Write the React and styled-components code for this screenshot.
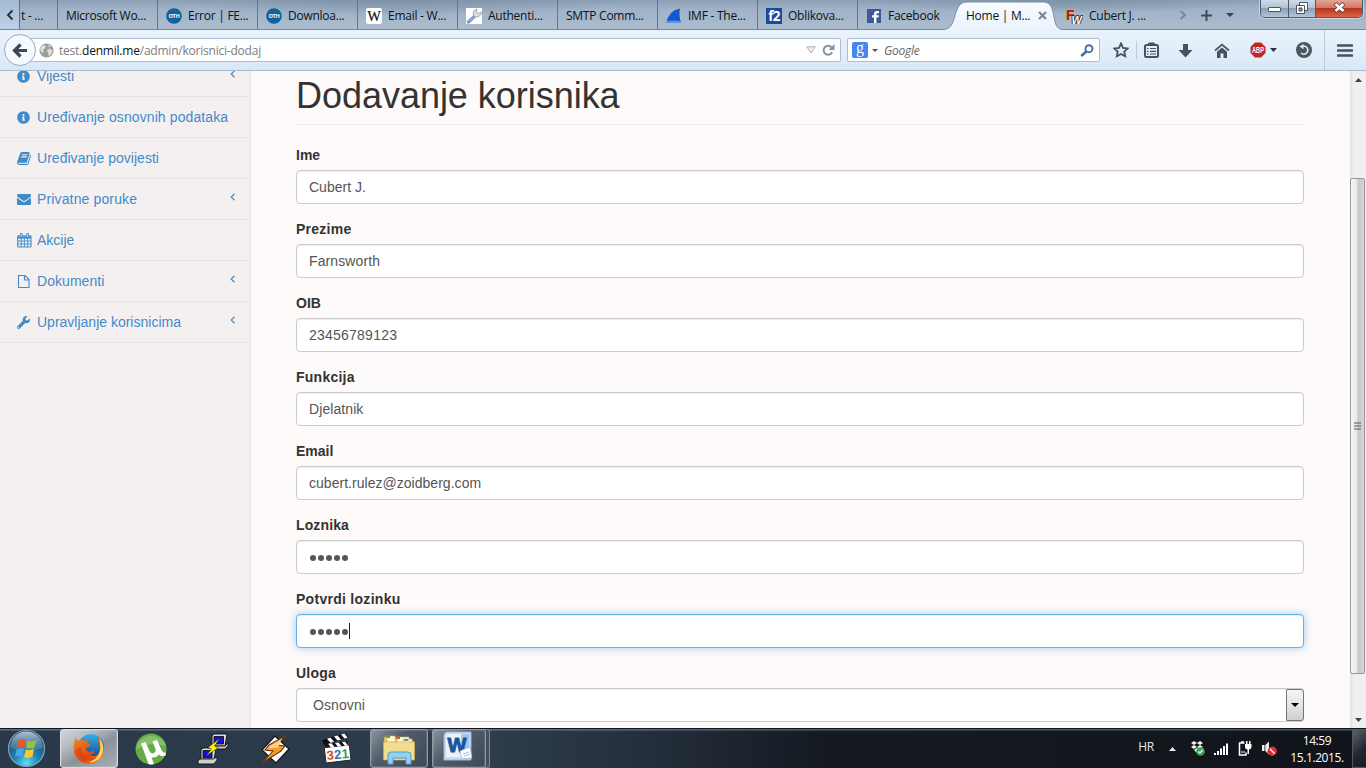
import React from "react";
import styled, { createGlobalStyle, css } from "styled-components";
import { FaInfoCircle, FaWrench } from "react-icons/fa";

const Global = createGlobalStyle`
  * { box-sizing: border-box; }
  body { margin: 0; width: 1366px; height: 768px; overflow: hidden; }
  svg { display: block; flex: none; }
`;
const ui = `"Open Sans", "Noto Sans", sans-serif`;

const Screen = styled.div`
  width: 1366px; height: 768px; display: flex; flex-direction: column;
  overflow: hidden; font-family: "Liberation Sans", Arial, sans-serif;
`;

/* ---------- tab strip ---------- */
const TabStrip = styled.header`
  height: 30px; flex: none; display: flex; position: relative;
  background:
    radial-gradient(ellipse 230px 16px at 400px 0, #7e92a8 0, transparent 100%),
    radial-gradient(ellipse 200px 14px at 1060px 0, #7e92a8 0, transparent 100%),
    linear-gradient(#8c9fb5 0, #9fb2c8 30%, #abbdcd 100%);
  border-bottom: 1px solid #74879c;
`;
const ScrollLeft = styled.div`
  width: 20px; flex: none; display: flex; align-items: center; padding-left: 6px;
  background: linear-gradient(#a3b9d1, #bdd2e8); border-right: 1px solid #5d6f84;
`;
const Tab = styled.div`
  width: ${(p) => p.$w || 100}px; flex: none; display: flex; align-items: center; gap: 6px;
  padding-left: ${(p) => (p.$pad ?? 8)}px; padding-top: 2px;
  border-right: ${(p) => (p.$last ? "0" : "1px solid #63768b")};
  font: 12px/16px ${ui}; letter-spacing: ${(p) => p.$ls ?? -0.25}px; color: #0d1116; white-space: nowrap;
`;
const ActiveTab = styled(Tab)`
  position: relative; padding: 2px 0 0 23px; border: 0; gap: 8px; z-index: 1;
`;
const TabShape = styled.svg`
  position: absolute; left: 0; top: 0; z-index: -1;
`;
const StripTools = styled.div`
  display: flex; align-items: center; gap: 14px; padding-left: 11px; padding-top: 1px;
`;
const WindowButtons = styled.div`
  margin-left: auto; margin-right: 3px; height: 18px; display: flex; flex: none;
  border: 1px solid #4d5a69; border-top: 0; border-radius: 0 0 5px 5px; overflow: hidden;
  box-shadow: 0 0 0 1px rgba(255,255,255,.45);
`;
const WinBtn = styled.div`
  width: ${(p) => p.$w}px; display: flex; align-items: center; justify-content: center; padding-bottom: 2px;
  border-right: ${(p) => (p.$close ? "0" : "1px solid #4d5a69")};
  background: ${(p) => p.$close
    ? "linear-gradient(#e5a496 0, #d0796a 45%, #b8361f 50%, #d9644a 100%)"
    : "linear-gradient(#cfdbe8 0, #b3c3d4 45%, #8ba0b6 50%, #b3c7da 100%)"};
`;

/* ---------- navigation bar ---------- */
const NavBar = styled.div`
  height: 41px; flex: none; display: flex; align-items: center;
  background: linear-gradient(#eaf3fc, #d9e8f7); border-bottom: 1px solid #a4bbd3;
`;
const BackButton = styled.div`
  width: 32px; height: 32px; margin-left: 4px; border-radius: 50%; flex: none; z-index: 1;
  border: 1px solid #97abc2; background: #f6faff; display: flex; align-items: center; justify-content: center;
`;
const Field = styled.div`
  height: 24px; flex: none; display: flex; align-items: center; background: #fff; border: 1px solid #abbfd4;
  border-radius: 2px; font: 12px/16px ${ui};
`;
const AddressBar = styled(Field)`
  width: 812px; margin-left: -7px; padding: 0 4px 0 10px; border-left: 0;
`;
const Url = styled.span`
  margin-left: 5px; padding-top: 1px; flex: 1; letter-spacing: -0.22px; color: #7c7c7c;
  b { font-weight: 400; color: #111; }
`;
const SearchBar = styled(Field)`
  width: 253px; margin-left: 6px; padding: 0 5px 0 4px; font-style: italic; color: #666;
`;
const SearchText = styled.span`flex: 1; margin-left: 6px; padding-top: 1px; letter-spacing: -0.25px;`;
const GoogleMark = styled.span`
  width: 16px; height: 16px; margin-right: 4px; border-radius: 2px; background: #4486f2; color: #fff;
  font: 400 16px/12px "Liberation Serif", serif; text-align: center;
`;
const Tools = styled.div`display: flex; align-items: center; flex: 1; padding-left: 13px;`;
const Tool = styled.div`margin-right: ${(p) => p.$mr || 0}px;`;
const Divider = styled.div`
  width: 1px; height: ${(p) => p.$h}px; background: #bccbdc; margin-right: ${(p) => p.$mr}px;
`;

/* ---------- page ---------- */
const Page = styled.main`
  height: 657px; flex: none; display: flex; overflow: hidden; background: #fefaf9;
`;
const Sidebar = styled.nav`
  width: 251px; flex: none; background: #f5f0f0; border-right: 1px solid #e9e4e4; overflow: hidden;
`;
const Menu = styled.div`margin-top: -15px;`;
const MenuItem = styled.a`
  height: 41px; display: flex; align-items: center; padding: 0 14px 0 17px; letter-spacing: ${(p) => p.$ls || 0}px;
  border-bottom: 1px solid #e7e3e3; color: #428bca; font-size: 14px; line-height: 20px; white-space: nowrap;
`;
const MenuIcon = styled.span`width: 20px; display: flex; flex: none;`;
const Chevron = styled.svg`margin: -5px 0 0 auto;`;
const Content = styled.section`flex: 1; padding: 4px 46px 0 45px; overflow: hidden;`;
const Title = styled.h1`
  margin: 0 0 20px; padding-top: 1px; height: 50px; border-bottom: 1px solid #eee9e8;
  font: 400 36px/40px "Liberation Sans", Arial, sans-serif; color: #333; letter-spacing: -0.03px;
`;
const Group = styled.div`margin-bottom: 15px;`;
const Label = styled.label`
  display: block; margin-bottom: 5px; font-size: 14px; line-height: 20px; font-weight: 700; color: #333;
  letter-spacing: ${(p) => p.$ls || 0}px;
`;
const Input = styled.div`
  height: 34px; display: flex; align-items: center; padding-left: 12px; border-radius: 4px;
  border: 1px solid #ccc; background: #fff; color: #555; font-size: 14px; line-height: 20px;
  letter-spacing: ${(p) => p.$ls || 0}px;
  box-shadow: inset 0 1px 1px rgba(0,0,0,.075);
  ${(p) => p.$focus && css`
    border-color: #66afe9;
    box-shadow: inset 0 1px 1px rgba(0,0,0,.075), 0 0 8px rgba(102,175,233,.6);
  `}
`;
const Select = styled(Input)`padding-left: 16px; border-right: 0; justify-content: space-between;`;
const SelectArrow = styled.span`
  width: 18px; height: 32px; border: 1px solid #757575; border-radius: 1px 3px 3px 1px; display: flex; align-items: center;
  justify-content: center; background: linear-gradient(#f3f3f3, #e6e6e6 50%, #cfcfcf);
`;
const Dots = styled.span`display: flex; gap: 2px; padding-left: 1px;`;
const Dot = styled.i`width: 6px; height: 6px; border-radius: 50%; background: #555; margin-top: 1px;`;
const Caret = styled.i`width: 1px; height: 16px; background: #222; margin-left: 1px; margin-top: -1px;`;

const ScrollBar = styled.div`
  width: 16px; flex: none; display: flex; flex-direction: column; align-items: flex-start;
  background: linear-gradient(90deg, #e3e3e3, #efefef 25%, #f0f0f0);
`;
const ScrollEnd = styled.div`
  height: ${(p) => p.$h}px; padding: ${(p) => p.$pt}px 0 0 5px; flex: none;
`;
const Thumb = styled.div`
  width: 15px; height: 496px; flex: none; border: 1px solid #979797; border-radius: 2px;
  background: linear-gradient(90deg, #f6f6f6, #e7e7e9 45%, #c7c7cb 55%, #d4d4d8);
  display: flex; align-items: center; justify-content: center;
`;

/* ---------- task bar ---------- */
const TaskBar = styled.footer`
  height: 40px; flex: none; display: flex; align-items: stretch; gap: 4px; border-top: 1px solid #0d1622;
  background:
    linear-gradient(rgba(190,210,230,.45) 0, rgba(190,210,230,.06) 2px, transparent 3px),
    linear-gradient(90deg, #29394a 0, #2e3c4c 36%, #232e3a 48%, #151a22 60%, #10141a 100%);
`;
const StartSlot = styled.div`width: 56px; display: flex; align-items: center; padding-left: 7px;`;
const TaskSlot = styled.div`
  width: 58px; display: flex; align-items: center; justify-content: center; border-radius: 3px;
  ${(p) => p.$open && css`
    border: 1px solid #8f9aa6; box-shadow: inset 0 0 0 1px rgba(255,255,255,.12);
    background: linear-gradient(135deg, #8a939d 0, #515c68 40%, #3e4a56 100%);
  `}
  ${(p) => p.$active && css`
    border-color: #d9dde1;
    background: linear-gradient(150deg, #d2d4d7 0, #b5b9be 30%, #8b9299 55%, #a9aeb4 100%);
  `}
`;
const StackSlot = styled.div`
  width: 58px; display: flex; border: 1px solid #7f8b97; border-left: 0; border-radius: 3px; background: #424e5b;
`;
const StackFront = styled(TaskSlot)`width: 54px; margin: -1px 0; padding: 0 4px 4px 0;`;
const Tray = styled.div`
  margin-left: auto; display: flex; align-items: center; color: #fff; font: 12px/17px ${ui}; letter-spacing: -0.4px;
`;
const Lang = styled.span`margin-right: 15px; margin-top: -5px; font-size: 12px; letter-spacing: -0.2px; color: #e5e8ec;`;
const TrayIcon = styled.span`margin-right: ${(p) => p.$mr}px;`;
const Clock = styled.div`width: 62px; text-align: center; margin-right: 4px;`;
const ShowDesktop = styled.div`
  width: 14px; align-self: stretch; border: 1px solid #4e5864; border-right: 0;
  background: linear-gradient(135deg, #5a636d, #20262e 60%, #181d24);
`;

const OthIcon = () => (
  <svg width="16" height="16" viewBox="0 0 16 16">
    <circle cx="8" cy="8" r="7.8" fill="#126299" />
    <text x="8" y="10" textAnchor="middle" fontFamily="Open Sans" fontWeight="700" fontSize="5.6" fill="#fff">OTH</text>
  </svg>
);
const WikiIcon = () => (
  <svg width="16" height="16" viewBox="0 0 16 16">
    <rect width="16" height="16" rx="2" fill="#fff" />
    <text x="8" y="13" textAnchor="middle" fontFamily="Liberation Serif" fontSize="14.5" fill="#111" stroke="#111" strokeWidth=".2">W</text>
  </svg>
);
const ToolIcon = () => (
  <svg width="16" height="16" viewBox="0 0 16 16">
    <rect width="16" height="16" fill="#fff" />
    <path d="M8 7 1 13.500Q1 16 3.500 15L9.500 9z" fill="#8aa8dc" stroke="#5e7fb8" strokeWidth=".8" />
    <path d="M7 7Q7 2 11 1L10.500 4.500 12 5.500 15.500 4Q15 9 9.500 9z" fill="#ddd" stroke="#9a9a9a" strokeWidth=".8" />
  </svg>
);
const FinIcon = () => (
  <svg width="16" height="16" viewBox="0 0 16 16">
    <path d="M.5 15Q2 3 14 .5 12.500 7 15 15z" fill="#1557cf" />
    <path d="M.5 15 1.200 13Q8 12 14.500 13L15 15z" fill="#5c93e4" />
  </svg>
);
const F2Icon = () => (
  <svg width="16" height="16" viewBox="0 0 16 16">
    <rect width="16" height="16" fill="#1b4a9c" />
    <text x="8" y="13" textAnchor="middle" fontFamily="Open Sans" fontWeight="700" fontSize="13.500" letterSpacing="-.7" fill="#fff">f2</text>
  </svg>
);
const FbIcon = () => (
  <svg width="16" height="16" viewBox="0 0 16 16">
    <rect x="1" y="1" width="14" height="14" fill="#3c5a99" />
    <path d="M8 15V9.500H6V7.300h2V6Q8 3 11 3h2v2.200h-1.300Q10.400 5.200 10.400 6.300v1h2.500l-.4 2.200h-2.100V15z" fill="#fff" />
  </svg>
);
const FwIcon = () => (
  <svg width="17" height="16" viewBox="0 0 17 16">
    <text x="0" y="11.500" fontFamily="Liberation Sans" fontWeight="700" fontSize="14" fill="#b01912" stroke="#f5b21f" strokeWidth=".8" paintOrder="stroke">F</text>
    <text x="5.500" y="15.500" fontFamily="Liberation Sans" fontWeight="700" fontStyle="italic" fontSize="11" fill="#fff" stroke="#222" strokeWidth="1.600" paintOrder="stroke">W</text>
  </svg>
);

const tabs = [
  { icon: null, text: "Microsoft Wo..." },
  { icon: <OthIcon />, text: "Error | FE..." },
  { icon: <OthIcon />, text: "Downloa..." },
  { icon: <WikiIcon />, text: "Email - W..." },
  { icon: <ToolIcon />, text: "Authenti..." },
  { icon: null, text: "SMTP Comm..." },
  { icon: <FinIcon />, text: "IMF - The..." },
  { icon: <F2Icon />, text: "Oblikova..." },
];

const InfoGlyph = () => <FaInfoCircle size={13} />;
const BookGlyph = () => (
  <svg width="14" height="15" viewBox="0 0 1664 1792" fill="currentColor">
    <path d="M1639 478q40 57 18 129l-275 906q-19 64-76.500 107.500T1183 1664H260q-77 0-148.500-53.500T12 1479q-24-67-2-127 0-4 3-27t4-37q1-8-3-21.500t-3-19.500q2-11 8-21t16.500-23.500T52 1179q23-38 45-91.500t30-91.500q3-10 .5-30t-.5-28q3-11 17-28t17-23q21-36 42-92t25-90q1-9-2.500-32t.5-28q4-13 22-30.500t22-22.500q19-26 42.500-84.500T340 411q1-8-3-25.500t-2-26.500q2-8 9-18t18-23 17-21q8-12 16.500-30.500t15-35 16-36 19.500-32T472.500 140t36-11.500T556 134l-1 3q38-9 51-9h761q74 0 114 56t18 130l-274 906q-36 119-71.500 153.500T1025 1408H156q-27 0-38 15-11 16-1 43 24 70 144 70h923q29 0 56-15.500t35-41.500l300-987q7-22 5-57 38 15 59 43zm-1064 2q-4 13 2 22.500t20 9.500h608q13 0 25.500-9.500T1247 480l21-64q4-13-2-22.500t-20-9.500H638q-13 0-25.500 9.500T596 416zm-83 256q-4 13 2 22.500t20 9.500h608q13 0 25.500-9.500T1164 736l21-64q4-13-2-22.500t-20-9.500H555q-13 0-25.500 9.500T513 672z" />
  </svg>
);
const MailGlyph = () => (
  <svg width="14" height="14" viewBox="0 0 1792 1792" fill="currentColor">
    <path d="M1792 710v794q0 66-47 113t-113 47H160q-66 0-113-47T0 1504V710q44 49 101 87 362 246 497 345 57 42 92.500 65.500t94.500 48 110 24.500h2q51 0 110-24.500t94.500-48T1194 1142q170-123 498-345 57-39 100-87zm0-294q0 79-49 151t-122 123q-376 261-468 325-10 7-42.500 31t-54 38.500-52 32.500-57.500 27-50 9h-2q-23 0-50-9t-57.500-27-52-32.500T683 1046t-42.500-31q-91-64-262-182.500T173 690q-62-42-117-115.500T1 438q0-78 41.500-130T160 256h1472q65 0 112.500 47t47.500 113z" />
  </svg>
);
const CalendarGlyph = () => (
  <svg width="15" height="15" viewBox="0 0 15 15" fill="none" stroke="currentColor">
    <rect x=".7" y="2.700" width="13.300" height="11.300" rx=".8" strokeWidth="1.100" />
    <path d="M1 4.500h13" strokeWidth="2.200" />
    <path d="M1 8h13M1 11h13M4.200 5v9M7.400 5v9M10.600 5v9" strokeWidth=".9" />
    <path d="M4.200 .8v3.400M10.600 .8v3.400" strokeWidth="2.400" strokeLinecap="round" />
    <path d="M4.200 1v3M10.600 1v3" stroke="#f5f0f0" strokeWidth=".8" />
  </svg>
);
const FileGlyph = () => (
  <svg width="13" height="15" viewBox="0 0 13 15" fill="none" stroke="currentColor" strokeWidth="1.100">
    <path d="M1.500 1.500h6.500l4 4v8h-10.500zM7.500 1.500v4.500H12" />
  </svg>
);

const menu = [
  { icon: <InfoGlyph />, text: "Vijesti", arrow: true },
  { icon: <InfoGlyph />, text: "Uređivanje osnovnih podataka", ls: 0.1 },
  { icon: <BookGlyph />, text: "Uređivanje povijesti", ls: 0.03 },
  { icon: <MailGlyph />, text: "Privatne poruke", arrow: true, ls: 0.14 },
  { icon: <CalendarGlyph />, text: "Akcije" },
  { icon: <FileGlyph />, text: "Dokumenti", arrow: true, ls: 0.05 },
  { icon: <FaWrench size={13} />, text: "Upravljanje korisnicima", arrow: true },
];

const fields = [
  { label: "Ime", value: "Cubert J." },
  { label: "Prezime", value: "Farnsworth", ls: 0.25, vls: 0.1 },
  { label: "OIB", value: "23456789123", vls: 0.23 },
  { label: "Funkcija", value: "Djelatnik", ls: 0.25, vls: 0.08 },
  { label: "Email", value: "cubert.rulez@zoidberg.com", vls: 0.03 },
];

const Triangle = ({ w = 7, h = 4, up, color = "#444" }) => (
  <svg width={w} height={h} viewBox="0 0 8 4" preserveAspectRatio="none">
    <path d={up ? "M0 4 4 0 8 4z" : "M0 0H8L4 4z"} fill={color} />
  </svg>
);

const Password = ({ caret }) => (
  <>
    <Dots>{[0, 1, 2, 3, 4].map((i) => <Dot key={i} />)}</Dots>
    {caret && <Caret />}
  </>
);

function Tabs() {
  return (
    <TabStrip>
      <ScrollLeft>
        <svg width="8" height="12" viewBox="0 0 8 12"><path d="M6.500 1.500 2 6l4.500 4.500" fill="none" stroke="#263342" strokeWidth="2" /></svg>
      </ScrollLeft>
      <Tab $w={38} $pad={1}>t - ...</Tab>
      {tabs.map((t, i) => <Tab key={i}>{t.icon}{t.text}</Tab>)}
      <Tab $w={85} $last><FbIcon />Facebook</Tab>
      <ActiveTab $w={115}>
        <TabShape width="124" height="31" viewBox="0 0 124 31">
          <defs><linearGradient id="tab" x2="0" y2="1"><stop stopColor="#f8fbff" /><stop offset="1" stopColor="#eaf3fc" /></linearGradient></defs>
          <path d="M0 29.500C16 29.500 8 2 24 2H100C116 2 106 29.500 120 29.500V31H0z" fill="url(#tab)" />
          <path d="M0 29.500C16 29.500 8 2 24 2H100C116 2 106 29.500 120 29.500" fill="none" stroke="#7b8ea4" />
        </TabShape>
        Home | M...
        <svg width="9" height="9" viewBox="0 0 9 9"><path d="M1 1l7 7M8 1 1 8" stroke="#7c8794" strokeWidth="2.200" /></svg>
      </ActiveTab>
      <Tab $w={110} $last $pad={8}><FwIcon />Cubert J. ...</Tab>
      <StripTools>
        <svg width="8" height="10" viewBox="0 0 8 10"><path d="M1.500 1 6 5 1.500 9" fill="none" stroke="#76879a" strokeWidth="2" /></svg>
        <svg width="11" height="11" viewBox="0 0 11 11"><path d="M5.500 0v11M0 5.500h11" stroke="#3e4b59" strokeWidth="2" /></svg>
        <Triangle w={8} h={4} color="#35414e" />
      </StripTools>
      <WindowButtons>
        <WinBtn $w={28}><svg width="13" height="8" viewBox="0 0 13 8"><rect x=".5" y="3.500" width="12" height="4" rx=".5" fill="#fff" stroke="#4c5663" /></svg></WinBtn>
        <WinBtn $w={27}>
          <svg width="12" height="12" viewBox="0 0 12 12" fill="#fff" stroke="#4c5663"><path d="M3.500 .5h8v8h-8z" /><path d="M.5 3.500h8v8h-8z" /><path d="M3 6h3v3H3z" fill="#8295aa" /></svg>
        </WinBtn>
        <WinBtn $w={46} $close>
          <svg width="13" height="11" viewBox="0 0 13 11"><path d="M2 1.500l9 8M11 1.500l-9 8" stroke="#643a38" strokeWidth="4" /><path d="M2.500 2l8 7M10.500 2l-8 7" stroke="#fff" strokeWidth="2.600" /></svg>
        </WinBtn>
      </WindowButtons>
    </TabStrip>
  );
}

function Navigation() {
  return (
    <NavBar>
      <BackButton>
        <svg width="16" height="15" viewBox="0 0 16 15"><path d="M8.500 1.500 2.500 7.500l6 6M3 7.500h12" fill="none" stroke="#3c4957" strokeWidth="3.200" /></svg>
      </BackButton>
      <AddressBar>
        <svg width="15" height="15" viewBox="0 0 15 15">
          <circle cx="7.500" cy="7.500" r="7" fill="#9b9b9b" />
          <path d="M2 3.500 5 2l2 1.500L5.500 6 4 6.500 5 9 3.500 10 1 7zM8 7l3-1.500 2.500 2-1 3-2.500 3-1-3.500zM9 1.500l3 2-2 1z" fill="#dedede" />
        </svg>
        <Url>test.<b>denmil.me</b>/admin/korisnici-dodaj</Url>
        <svg width="10" height="8" viewBox="0 0 10 8"><path d="M.8 .8h8.400L5 7z" fill="#f0f0f0" stroke="#b0b0b0" /></svg>
        <svg width="20" height="13" viewBox="0 0 20 13"><path d="M16.200 8.200A4.500 4.500 0 1 1 15.800 3.500" fill="none" stroke="#8791a0" strokeWidth="2" /><path d="M18.500 0v6h-6z" fill="#8791a0" /></svg>
      </AddressBar>
      <SearchBar>
        <GoogleMark>g</GoogleMark>
        <Triangle w={6} h={3} color="#555" />
        <SearchText>Google</SearchText>
        <svg width="14" height="13" viewBox="0 0 14 13"><circle cx="9" cy="4.700" r="3.500" fill="none" stroke="#3f6fa5" strokeWidth="1.900" /><path d="M6.500 7.200 1.300 12" stroke="#3f6fa5" strokeWidth="2.600" /></svg>
      </SearchBar>
      <Tools>
        <Tool $mr={7}><svg width="16" height="16" viewBox="0 0 16 16"><path d="M8 1.500l2 4.300 4.700.6-3.400 3.200.9 4.700L8 12l-4.200 2.300.9-4.700L1.300 6.400 6 5.800z" fill="none" stroke="#46535f" strokeWidth="1.800" /></svg></Tool>
        <Divider $h={18} $mr={7} />
        <Tool $mr={19}>
          <svg width="15" height="16" viewBox="0 0 15 16"><rect x="1" y="3" width="13" height="12" rx="1.500" fill="none" stroke="#46535f" strokeWidth="2" /><path d="M4 1.500Q4 .5 5.500 .5h4Q11 .5 11 1.500V4H4z" fill="#46535f" /><path d="M3 6.500h1.500M3 9.300h1.500M3 12h1.500M6 6.500h6M6 9.300h6M6 12h6" stroke="#46535f" strokeWidth="1.200" /></svg>
        </Tool>
        <Tool $mr={21}><svg width="15" height="15" viewBox="0 0 15 15"><path d="M5 1h5v6h4.500l-7 7.500L.5 7H5z" fill="#46535f" /></svg></Tool>
        <Tool $mr={20}><svg width="16" height="15" viewBox="0 0 16 15"><path d="M1 7.500 8 1.500l7 6" fill="none" stroke="#46535f" strokeWidth="1.700" /><path d="M3 8.800 8 4.500l5 4.300V15H9.500v-4.500h-3V15H3z" fill="#46535f" /></svg></Tool>
        <Tool $mr={4}><svg width="16" height="16" viewBox="0 0 16 16"><path d="M5 .5h6L15.500 5v6L11 15.500H5L.5 11V5z" fill="#c0281f" /><text x="8" y="11.200" textAnchor="middle" fontFamily="Liberation Sans" fontWeight="700" fontSize="8.500" textLength="12" lengthAdjust="spacingAndGlyphs" fill="#fff">ABP</text></svg></Tool>
        <Tool $mr={19}><Triangle w={7} h={4} color="#26313b" /></Tool>
        <Tool $mr={12}><svg width="16" height="16" viewBox="0 0 16 16"><circle cx="8" cy="8" r="8" fill="#4c5762" /><path d="M6.500 4.300A4 4 0 1 1 5 11" fill="none" stroke="#e4ebf2" strokeWidth="1.600" /><path d="M7.500 2v5.200L3.500 4.500z" fill="#e4ebf2" /></svg></Tool>
        <Divider $h={40} $mr={12} />
        <Tool><svg width="16" height="13" viewBox="0 0 16 13"><path d="M1 1.500h14M1 6.500h14M1 11.500h14" stroke="#46535f" strokeWidth="2.600" strokeLinecap="round" /></svg></Tool>
      </Tools>
    </NavBar>
  );
}

function Body() {
  return (
    <Page>
      <Sidebar>
        <Menu>
          {menu.map((m) => (
            <MenuItem key={m.text} $ls={m.ls}>
              <MenuIcon>{m.icon}</MenuIcon>
              {m.text}
              {m.arrow && <Chevron width="6" height="8" viewBox="0 0 6 8"><path d="M4.500 .8 1.200 4l3.300 3.200" fill="none" stroke="#428bca" strokeWidth="1.200" /></Chevron>}
            </MenuItem>
          ))}
        </Menu>
      </Sidebar>
      <Content>
        <Title>Dodavanje korisnika</Title>
        {fields.map((f) => (
          <Group key={f.label}><Label $ls={f.ls}>{f.label}</Label><Input $ls={f.vls}>{f.value}</Input></Group>
        ))}
        <Group><Label $ls={0.12}>Loznika</Label><Input><Password /></Input></Group>
        <Group><Label $ls={0.28}>Potvrdi lozinku</Label><Input $focus><Password caret /></Input></Group>
        <Group>
          <Label $ls={0.2}>Uloga</Label>
          <Select $ls={0.1}>Osnovni<SelectArrow><Triangle w={8} h={4} color="#000" /></SelectArrow></Select>
        </Group>
      </Content>
      <ScrollBar>
        <ScrollEnd $h={107} $pt={7}><Triangle up w={7} h={4} /></ScrollEnd>
        <Thumb><svg width="7" height="8" viewBox="0 0 7 8"><path d="M0 1h7M0 4h7M0 7h7" stroke="#555" strokeWidth="1.200" /></svg></Thumb>
        <ScrollEnd $h={54} $pt={44}><Triangle w={7} h={4} /></ScrollEnd>
      </ScrollBar>
    </Page>
  );
}

const StartOrb = () => (
  <svg width="39" height="39" viewBox="0 0 39 39">
    <defs>
      <radialGradient id="orb" cx=".5" cy=".9" r=".8"><stop stopColor="#5fe0fb" /><stop offset=".4" stopColor="#2287b8" /><stop offset="1" stopColor="#1b3f61" /></radialGradient>
      <linearGradient id="gloss" x2="0" y2="1"><stop stopColor="#dbe8f0" stopOpacity=".8" /><stop offset="1" stopColor="#7fa5bf" stopOpacity=".25" /></linearGradient>
    </defs>
    <circle cx="19.500" cy="19.500" r="18" fill="url(#orb)" stroke="#7ba2ba" strokeWidth="1.200" />
    <path d="M3 19A16.500 16.500 0 0 1 36 19Q20 24 3 19z" fill="url(#gloss)" />
    <path d="M11.500 11.500Q15 9 19 11L17.500 18.500Q14 17 10 19z" fill="#e8582b" />
    <path d="M20.500 11.500Q24 13.500 29.500 11L27.500 18.500Q23 20.500 19 18.800z" fill="#8fc640" />
    <path d="M9.600 20.300Q13 18.500 17.200 20L15.600 27.500Q12 25.800 8 28z" fill="#49a5e6" />
    <path d="M18.700 20.500Q22 22 27 20L25.500 27.500Q21 30 17 28z" fill="#fcc932" />
  </svg>
);
const Firefox = () => (
  <svg width="32" height="32" viewBox="0 0 32 32">
    <defs>
      <linearGradient id="fox" x2="1" y2="1"><stop stopColor="#f08a22" /><stop offset=".6" stopColor="#dd4b13" /><stop offset="1" stopColor="#f6a327" /></linearGradient>
      <linearGradient id="globe" x2="0" y2="1"><stop stopColor="#35b1e8" /><stop offset="1" stopColor="#123f86" /></linearGradient>
    </defs>
    <circle cx="18" cy="14" r="13" fill="url(#globe)" />
    <path d="M2 5Q4 7 6 7.500 9 6.500 12 8 12.500 6 15 5 14 8 15 10L18 12Q16 14 13 15 13 19 17 19 20 17 22 19 20 22 17 22 23 25 26 20 28 15 25 9 26 8 24 4 30 8 31 16 30 29 17 31 5 31 1 20 0 13 2 5z" fill="url(#fox)" />
    <path d="M26 5Q34 15 27 25 22 30 16 29 25 26 27 18 28 11 26 5z" fill="#fbd65a" />
    <path d="M2 18Q4 27 13 28 20 29 24 24 17 26 12 22 8 19 8 14 5 14 2 18z" fill="#d9400f" opacity=".65" />
  </svg>
);
const UTorrent = () => (
  <svg width="32" height="32" viewBox="0 0 32 32">
    <circle cx="16" cy="16" r="15.500" fill="#64ac43" />
    <path d="M1 17A15.500 15.500 0 0 1 31 13Q15 8 1 17z" fill="#84bf69" />
    <path d="M6 10.500 10.500 9 14.500 18Q16 21.500 19 20 21.500 18.500 20.500 16L17.500 8.500 22 7 26.500 17Q28 20.500 31 19.500L30.500 22.500Q26.500 24.500 24 21.500 21.500 25 16.500 24.500L19 31Q16 32 13.500 31z" fill="#fff" />
  </svg>
);
const Putty = () => (
  <svg width="32" height="32" viewBox="0 0 32 32" stroke="#111" strokeWidth=".9" strokeLinejoin="round">
    <path d="M15 3 17 1H30L28 13H15z" fill="#dcdcdc" />
    <path d="M13 13H28L31 10V13L28 16H13z" fill="#c2c2c2" />
    <path d="M17 3.500H26.500V11H17z" fill="#1414d4" />
    <path d="M4 17 6 15H19L17 27H4z" fill="#dcdcdc" />
    <path d="M1 28 3 26H16L20 24V27L17 31H1z" fill="#cfcfcf" />
    <path d="M6 17.500H15V25H6z" fill="#1414d4" />
    <path d="M23 5 11 14.500 14.500 16 9 23 21 15 17.500 13z" fill="#fff200" strokeWidth=".5" />
  </svg>
);
const Winamp = () => (
  <svg width="30" height="32" viewBox="0 0 30 32">
    <path d="M15 3 29 16 16 30 2 17z" fill="#fff" stroke="#111" strokeWidth="1.200" />
    <path d="M27 2 9 12 5 17 13 18 2 30 21 18 25 13 16 12z" fill="#f89b2c" stroke="#713508" strokeWidth="1.100" />
    <path d="M22 5.500 10 13 8 15.500 18 14.500z" fill="#ffd08a" />
  </svg>
);
const Mpc = () => (
  <svg width="32" height="32" viewBox="0 0 32 32">
    <path d="M1 7 25 0 27 4 3 12z" fill="#111" /><path d="M6 5.700l3.500 4 3.500-1-3.500-4zM13 3.600l3.500 4 3.500-1-3.500-4zM20 1.500l3.500 4 3-1L23.500 .5z" fill="#fff" />
    <path d="M3 12 28 9 30 27 5 30z" fill="#fff" stroke="#222" />
    <path d="M3 11 27 8.500 28 12.500 4 15z" fill="#151515" /><path d="M7 10.700l3 3.700 3.500-.4-3-3.700zM14 10l3 3.700 3.500-.4-3-3.700zM21 9.200l3 3.700 3-.4-3-3.700z" fill="#fff" />
    <g fontFamily="Liberation Sans" fontWeight="700" fontSize="13" transform="rotate(-5 16 20)"><text x="5.500" y="26" fill="#d44a24">3</text><text x="13" y="26" fill="#3976b8">2</text><text x="20.500" y="26" fill="#3d9a3c">1</text></g>
  </svg>
);
const Explorer = () => (
  <svg width="34" height="32" viewBox="0 0 34 32">
    <path d="M2 4h13v4h17v18H2z" fill="#e9c866" stroke="#b48f36" strokeWidth=".6" />
    <path d="M5 3h8v6H5zM15 4h12v6H15zM21 6h9v5h-9z" fill="#fff7d6" stroke="#d4b359" strokeWidth=".6" />
    <path d="M5 3h3v2H5z" fill="#43a843" /><path d="M14 4h4v2h-4z" fill="#e05434" /><path d="M22 6h4v2h-4z" fill="#4498dd" />
    <path d="M1.500 9h31v18h-31z" fill="#f3dd91" stroke="#d0ae55" strokeWidth=".6" />
    <path d="M6 31V22Q6 19 9 19H26Q29 19 29 22V31H24V25H11V31z" fill="#93d1ee" stroke="#4d9ec8" />
  </svg>
);
const Word = () => (
  <svg width="31" height="31" viewBox="0 0 31 31">
    <path d="M5 1H29V29H2V5Q2 1 5 1z" fill="#c9dcf3" stroke="#9bb8de" />
    <path d="M7 3H27V26H4V7Q4 3 7 3z" fill="#eaf2fc" />
    <path d="M19 3H27V18H19z" fill="#a7c4eb" />
    <text x="15" y="20.500" textAnchor="middle" fontFamily="Liberation Sans" fontWeight="700" fontSize="20" fill="#18559f" stroke="#18559f">W</text>
    <path d="M18 20 28 16 30 27 20 28z" fill="#fff" stroke="#99acc4" strokeWidth=".7" /><path d="M21 23l6-2M22 25l6-2" stroke="#8da6c6" strokeWidth=".7" />
  </svg>
);

function Taskbar() {
  return (
    <TaskBar>
      <StartSlot><StartOrb /></StartSlot>
      <TaskSlot $open $active><Firefox /></TaskSlot>
      <TaskSlot><UTorrent /></TaskSlot>
      <TaskSlot><Putty /></TaskSlot>
      <TaskSlot><Winamp /></TaskSlot>
      <TaskSlot><Mpc /></TaskSlot>
      <TaskSlot $open><Explorer /></TaskSlot>
      <StackSlot><StackFront $open><Word /></StackFront></StackSlot>
      <Tray>
        <Lang>HR</Lang>
        <TrayIcon $mr={14}><Triangle up w={7} h={4} color="#e8ecf0" /></TrayIcon>
        <TrayIcon $mr={9}>
          <svg width="15" height="15" viewBox="0 0 15 15"><path d="M4 0l3 2-3 2-3-2zM10 0l3 2-3 2-3-2zM4 4l3 2-3 2-3-2zM10 4l3 2-3 2-3-2zM4 9l3-2 3 2-3 3z" fill="#f4f4f4" /><circle cx="10.500" cy="10.500" r="4.300" fill="#36a852" /><path d="M8.500 10.500l1.500 1.500 2.700-3" fill="none" stroke="#fff" strokeWidth="1.200" /></svg>
        </TrayIcon>
        <TrayIcon $mr={9}>
          <svg width="15" height="12" viewBox="0 0 15 12" fill="#fff"><path d="M0 10h2v2H0zM3 8h2v4H3zM6 5.500h2V12H6zM9 3h2v9H9zM12 .5h2V12h-2z" /></svg>
        </TrayIcon>
        <TrayIcon $mr={10}>
          <svg width="14" height="15" viewBox="0 0 14 15"><path d="M6.500 2H1.500v12H8v-2.500M3 1h3" fill="none" stroke="#fff" strokeWidth="1.500" /><path d="M8 0h1.500v3H8zM11 0h1.500v3H11zM7 3h6.500v3Q13.500 8 11 8.500V13H9.500V8.500Q7 8 7 6z" fill="#fff" /><path d="M3 11h4" stroke="#fff" /></svg>
        </TrayIcon>
        <TrayIcon $mr={9}>
          <svg width="15" height="15" viewBox="0 0 15 15"><path d="M0 4h2.500v6H0zM3.300 4 7 .5v13L3.300 10z" fill="#eee" /><circle cx="10.200" cy="10.200" r="3.900" fill="#fff" stroke="#d72b24" strokeWidth="1.600" /><circle cx="10.200" cy="10.200" r="3.300" fill="#d72b24" /><path d="M8 8l4.500 4.500" stroke="#fff" strokeWidth="1.300" /></svg>
        </TrayIcon>
        <Clock>14:59<br />15.1.2015.</Clock>
        <ShowDesktop />
      </Tray>
    </TaskBar>
  );
}

export default function App() {
  return (
    <Screen>
      <Global />
      <Tabs />
      <Navigation />
      <Body />
      <Taskbar />
    </Screen>
  );
}
